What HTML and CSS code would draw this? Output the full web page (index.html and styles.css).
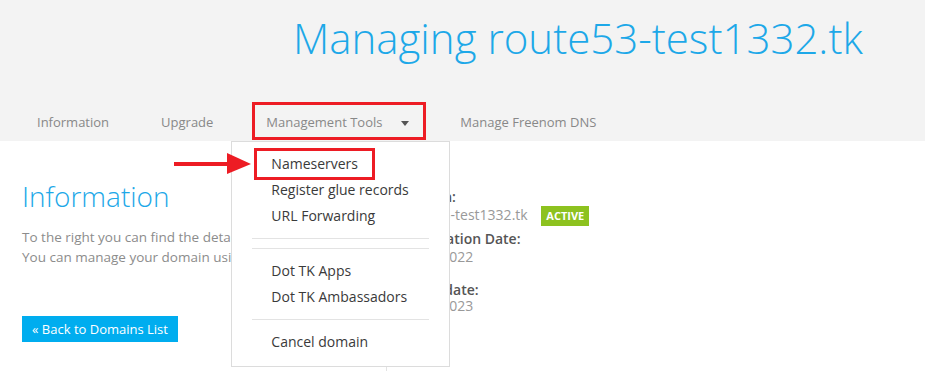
FILE: index.html
```html
<!DOCTYPE html>
<html lang="en">
<head>
<meta charset="UTF-8" />
<meta name="viewport" content="width=device-width, initial-scale=1" />
<title>Managing route53-test1332.tk</title>
<link rel="stylesheet" href="styles.css">
</head>
<body>

<div class="page">
  <header class="top">
    <h1 class="title">Managing route53-test1332.tk</h1>

    <nav class="tabs">
      <a class="tab" href="#">Information</a>
      <a class="tab" href="#">Upgrade</a>
      <div class="tab tab-open">
        Management Tools <span class="caret"></span>
        <ul class="dropdown">
          <li><a class="menu-item marked" href="#">Nameservers</a></li>
          <li><a class="menu-item" href="#">Register glue records</a></li>
          <li><a class="menu-item" href="#">URL Forwarding</a></li>
          <li class="divider"></li>
          <li class="divider"></li>
          <li><a class="menu-item" href="#">Dot TK Apps</a></li>
          <li><a class="menu-item" href="#">Dot TK Ambassadors</a></li>
          <li class="divider"></li>
          <li><a class="menu-item" href="#">Cancel domain</a></li>
        </ul>
      </div>
      <a class="tab" href="#">Manage Freenom DNS</a>
    </nav>
  </header>

  <main class="content">
    <section class="intro">
      <h2>Information</h2>
      <p>To the right you can find the details of your domain.<br>
      You can manage your domain using the tools in the menu above.</p>
      <a class="back-btn" href="#">&laquo; Back to Domains List</a>
    </section>

    <section class="details">
      <div class="row">
        <div class="label">Domain:</div>
        <div class="value">route53-test1332.tk <span class="badge">ACTIVE</span></div>
      </div>
      <div class="row row-2">
        <div class="label">Registration Date:</div>
        <div class="value">10/06/2022</div>
      </div>
      <div class="row row-3">
        <div class="label">Expiry date:</div>
        <div class="value">10/06/2023</div>
      </div>
    </section>
  </main>

  <!-- annotation arrow pointing at Nameservers -->
  <svg class="pointer" width="78" height="22" viewBox="0 0 78 22">
    <rect x="0" y="9" width="56" height="4" fill="#ed1c24" />
    <polygon points="53,0 77,11 53,21" fill="#ed1c24" />
  </svg>
</div>

</body>
</html>
```

FILE: styles.css
```css
* {
  box-sizing: border-box;
}
body {
  margin: 0;
  background: #fff;
  font-family: 'Open Sans', 'Liberation Sans', sans-serif;
  font-size: 14px;
  color: #555;
}
a {
  text-decoration: none;
}
.page {
  position: relative;
  width: 925px;
  height: 384px;
  overflow: hidden;
}
.top {
  background: #f3f3f3;
  height: 141px;
  display: flex;
  flex-direction: column;
}
.title {
  margin: 0 0 0 293px;
  padding-top: 9px;
  font-size: 42px;
  font-weight: 300;
  line-height: 57px;
  color: #1da8e8;
  white-space: nowrap;
}
.tabs {
  display: flex;
  margin-top: auto;
  margin-bottom: 1px;
  padding-left: 22px;
  height: 38px;
}
.tab {
  padding: 3px 15px 0;
  line-height: 35px;
  font-size: 13px;
  color: #888;
  white-space: nowrap;
}
.tab + .tab {
  margin-left: 22px;
}
.tab-open {
  position: relative;
  width: 174px;
  padding: 3px 0 0 14px;
  outline: 3px solid #ed1c24;
  outline-offset: -3px;
}
.tab + .tab-open {
  margin-left: 24px;
}
.tab-open + .tab {
  margin-left: 19px;
}
.caret {
  display: inline-block;
  margin-left: 15px;
  vertical-align: middle;
  border-top: 5px solid #555;
  border-left: 4px solid transparent;
  border-right: 4px solid transparent;
}
.dropdown {
  position: absolute;
  left: -21px;
  top: 39px;
  width: 219px;
  height: 226px;
  margin: 0;
  padding: 9px 0 0;
  list-style: none;
  background: #fff;
  border: 1px solid #dcdcdc;
  z-index: 5;
}
.menu-item {
  display: block;
  width: fit-content;
  margin-left: 25px;
  padding: 0 14px;
  line-height: 26px;
  font-size: 14px;
  color: #3a3a3a;
  white-space: nowrap;
}
.menu-item.marked {
  outline: 3px solid #ed1c24;
}
.divider {
  height: 1px;
  margin: 9px 20px;
  background: #e3e3e3;
}
.divider + .divider {
  margin-top: 0;
}
.content {
  display: flex;
}
.intro {
  width: 386px;
  padding-left: 22px;
  white-space: nowrap;
  overflow: hidden;
}
.intro h2 {
  margin: 35px 0 0;
  font-size: 28px;
  font-weight: 300;
  line-height: 41px;
  color: #1da8e8;
}
.intro p {
  margin: 10px 0 0;
  line-height: 20px;
  font-size: 13.5px;
  color: #8c8c8c;
}
.back-btn {
  display: inline-block;
  margin-top: 49px;
  padding: 0 10px;
  height: 26px;
  line-height: 26px;
  font-size: 13px;
  background: #00adef;
  color: #fff;
}
.details {
  margin-top: 40px;
  padding: 7px 0 0 12px;
  height: 190px;
  border-left: 1px solid #e3e3e3;
}
.label {
  font-weight: 600;
  line-height: 18px;
  color: #555;
}
.value {
  line-height: 18px;
  color: #999;
}
.row-2 {
  margin-top: 4px;
}
.row-3 {
  margin-top: 15px;
}
.row-3 .value {
  line-height: 14px;
}
.badge {
  display: inline-block;
  margin-left: 10px;
  padding: 0 5px;
  line-height: 20px;
  font-size: 11px;
  font-weight: 700;
  background: #8dc21f;
  color: #fff;
  vertical-align: middle;
}
.pointer {
  position: absolute;
  left: 174px;
  top: 153px;
  z-index: 6;
}
```
